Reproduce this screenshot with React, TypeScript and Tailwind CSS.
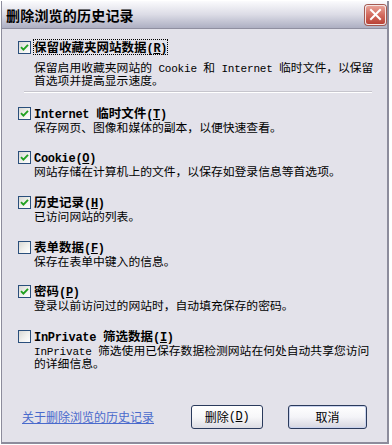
import React from "react";

function Check({ checked }: { checked: boolean }) {
  return (
    <div className="w-[13px] h-[13px] border border-[#2a4f7c] bg-gradient-to-br from-[#d8d8d4] via-[#efefec] to-white flex items-center justify-center shrink-0">
      {checked && (
        <svg width="9" height="9" viewBox="0 0 9 9">
          <path d="M1 4.2 L3.4 6.6 L8 1.8" stroke="#21a121" strokeWidth="1.9" fill="none" />
        </svg>
      )}
    </div>
  );
}

function Label({ checked, children, focus }: { checked: boolean; children: React.ReactNode; focus?: boolean }) {
  return (
    <div className="flex items-center h-[14px] pl-[16px]">
      <Check checked={checked} />
      <div
        className={
          "ml-[3px] h-[14px] text-[12.5px] leading-[14px] font-bold text-black whitespace-nowrap " +
          (focus ? "outline outline-1 outline-dotted outline-black" : "")
        }
      >
        {children}
      </div>
    </div>
  );
}

function Line({ children, h = 14 }: { children: React.ReactNode; h?: number }) {
  return (
    <div
      className={
        "pl-[32px] text-[11.8px] text-black whitespace-nowrap overflow-visible " +
        (h === 13 ? "h-[13px] leading-[13px]" : "h-[14px] leading-[14px]")
      }
    >
      {children}
    </div>
  );
}

const M = ({ children }: { children: React.ReactNode }) => (
  <span className="font-['Liberation_Mono',monospace] text-[12px] tracking-[-0.3px]">{children}</span>
);

const D = ({ children }: { children: React.ReactNode }) => (
  <span className="font-['Liberation_Mono',monospace] text-[11px] tracking-[-0.2px]">{children}</span>
);

const U = ({ children }: { children: React.ReactNode }) => <span className="underline">{children}</span>;

const P = ({ k }: { k: string }) => (
  <M>
    (<U>{k}</U>)
  </M>
);

export default function App() {
  return (
    <div className="w-[392px] h-[445px] bg-white pt-[1px] pl-[1px] font-['Noto_Sans_CJK_SC',sans-serif]">
      <div className="w-[388px] h-[443px] border-l border-r-2 border-b-2 border-[#8c8c9c] flex flex-col">
        <div className="h-[28px] shrink-0 flex items-center justify-between pl-[4px] pr-[1px] border-b border-[#8f8fa0] bg-gradient-to-b from-[#fbfbfd] via-[#dcdce6] to-[#adafc2]">
          <div className="text-[14px] leading-[16px] font-bold text-black tracking-[0.2px]">删除浏览的历史记录</div>
          <div className="w-[21px] h-[20px] rounded-[3px] border border-[#f4e6e4] bg-gradient-to-b from-[#e8a298] via-[#d26a5e] to-[#b94236] flex items-center justify-center shadow-[0_0_0_1px_#a45a52]">
            <svg width="13" height="13" viewBox="0 0 13 13">
              <path d="M2 2 L11 11 M11 2 L2 11" stroke="white" strokeWidth="2" strokeLinecap="square" />
            </svg>
          </div>
        </div>
        <div className="flex-1 bg-[#e3e2ea] flex flex-col">
          <div className="mt-[11px]">
            <Label checked focus>
              保留收藏夹网站数据<P k="R" />
            </Label>
          </div>
          <div className="mt-[6px]">
            <Line h={13}>
              保留启用收藏夹网站的<D> Cookie </D>和<D> Internet </D>临时文件，以保留
            </Line>
            <Line h={13}>首选项并提高显示速度。</Line>
          </div>
          <div className="mt-[5px] ml-[22px] w-[348px] h-[2px] border-t border-[#c6c5cd] border-b border-b-white" />
          <div className="mt-[13px]">
            <Label checked>
              <M>Internet </M>临时文件<P k="T" />
            </Label>
            <Line>保存网页、图像和媒体的副本，以便快速查看。</Line>
          </div>
          <div className="mt-[16px]">
            <Label checked>
              <M>Cookie</M>
              <P k="O" />
            </Label>
            <Line>网站存储在计算机上的文件，以保存如登录信息等首选项。</Line>
          </div>
          <div className="mt-[17px]">
            <Label checked>
              历史记录<P k="H" />
            </Label>
            <Line>已访问网站的列表。</Line>
          </div>
          <div className="mt-[17px]">
            <Label checked={false}>
              表单数据<P k="F" />
            </Label>
            <Line>保存在表单中键入的信息。</Line>
          </div>
          <div className="mt-[16px]">
            <Label checked>
              密码<P k="P" />
            </Label>
            <Line>登录以前访问过的网站时，自动填充保存的密码。</Line>
          </div>
          <div className="mt-[17px]">
            <Label checked={false}>
              <M>InPrivate </M>筛选数据<P k="I" />
            </Label>
            <Line h={13}>
              <D>InPrivate </D>筛选使用已保存数据检测网站在何处自动共享您访问
            </Line>
            <Line h={13}>的详细信息。</Line>
          </div>
          <div className="mt-auto mb-[13px] flex items-center pl-[20px] pr-[20px]">
            <div className="text-[12px] leading-[14px] text-[#4a6acc] underline whitespace-nowrap">关于删除浏览的历史记录</div>
            <div className="flex-1" />
            <div className="w-[72px] h-[24px] rounded-[3px] border border-[#2a3a5c] bg-gradient-to-b from-white via-[#f7f7f9] to-[#dcdce4] flex items-center justify-center text-[12px] leading-[14px] text-black">
              删除<P k="D" />
            </div>
            <div className="ml-[25px] w-[79px] h-[24px] rounded-[3px] border border-[#2a3a5c] bg-gradient-to-b from-white via-[#f4f4f8] to-[#d6d6e0] shadow-[inset_0_0_0_1px_#c9d3ee] flex items-center justify-center text-[12px] leading-[14px] text-black">
              取消
            </div>
          </div>
        </div>
      </div>
    </div>
  );
}
